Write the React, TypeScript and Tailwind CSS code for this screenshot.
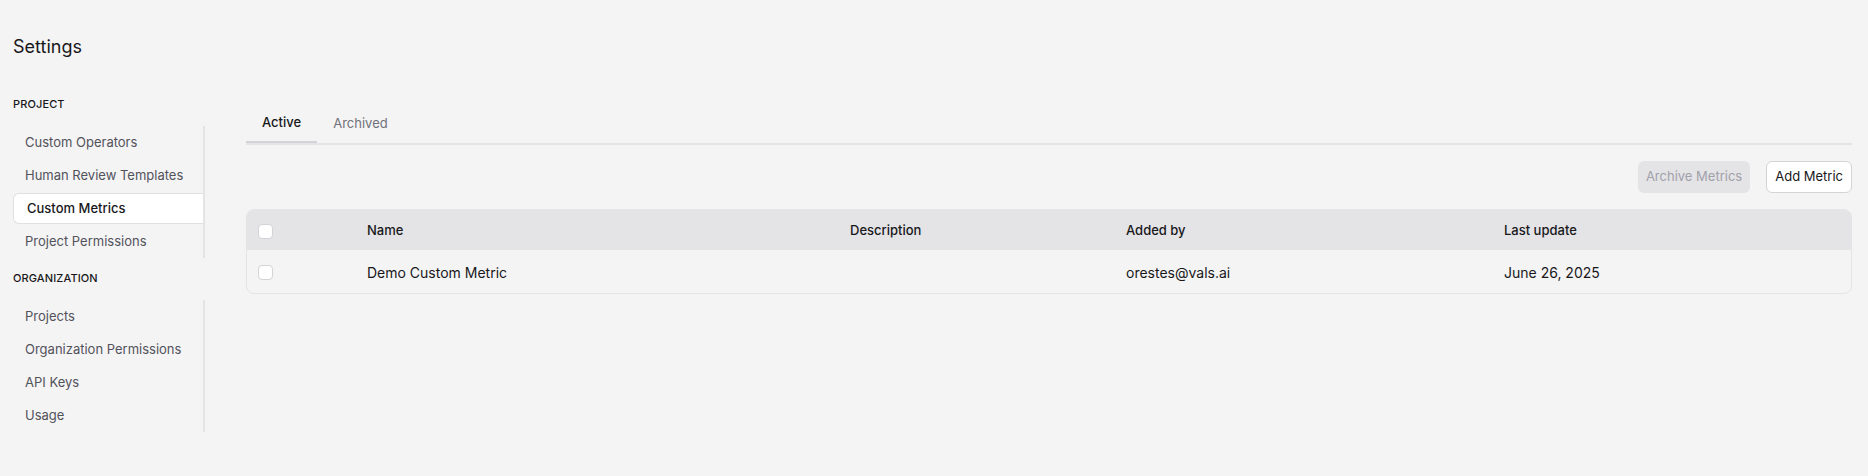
import React from 'react';

const projectLinks: string[] = ['Custom Operators', 'Human Review Templates', 'Custom Metrics', 'Project Permissions'];
const orgLinks: string[] = ['Projects', 'Organization Permissions', 'API Keys', 'Usage'];

const cols = 'grid grid-cols-[120px_483px_276px_378px_1fr] items-center';

const Checkbox: React.FC = () => (
  <span className="block w-[15px] h-[15px] rounded-[4px] bg-white border border-[#d4d4d8]" />
);

const NavGroup: React.FC<{ title: string; links: string[]; active?: string }> = ({ title, links, active }) => (
  <div>
    <div className="h-4 leading-4 text-[11px] font-medium text-[#18181b] tracking-[0.01em]">{title}</div>
    <ul className="mt-[14px] border-r-2 border-[#e4e4e7]">
      {links.map((l) =>
        l === active ? (
          <li key={l} className="h-[33px] flex items-center">
            <span className="flex items-center w-full h-[31px] pl-[13px] bg-white border border-r-0 border-[#e0e0e3] rounded-l-md text-[13px] font-medium text-[#18181b]">
              {l}
            </span>
          </li>
        ) : (
          <li key={l} className="h-[33px] flex items-center pl-3 text-[13px] text-[#52525b]">
            {l}
          </li>
        )
      )}
    </ul>
  </div>
);

const App: React.FC = () => {
  return (
    <div className="min-h-screen bg-[#f4f4f4] font-['Inter',sans-serif] text-[#18181b]">
      <h1 className="px-[13px] pt-[35px] text-lg leading-6">Settings</h1>

      <div className="flex items-start mt-[37px]">
        {/* sidebar */}
        <aside className="w-[192px] ml-[13px] shrink-0 flex flex-col gap-3">
          <NavGroup title="PROJECT" links={projectLinks} active="Custom Metrics" />
          <NavGroup title="ORGANIZATION" links={orgLinks} />
        </aside>

        {/* main */}
        <main className="flex-1 ml-[41px] mr-4 mt-[11px]">
          <div className="flex border-b-2 border-[#e4e4e7]">
            <button className="px-4 h-9 pb-[3px] -mb-[2px] border-b-2 border-[#d4d4d8] text-[13px] font-medium text-[#18181b]">
              Active
            </button>
            <button className="px-4 h-9 pb-[3px] text-[13px] text-[#71717a]">Archived</button>
          </div>

          <div className="flex justify-end gap-4 mt-4">
            <button className="h-8 px-2 rounded-md bg-[#e4e4e7] text-[13px] text-[#a1a1aa]">Archive Metrics</button>
            <button className="h-8 px-2 rounded-md bg-white border border-[#d4d4d8] text-[13px] text-[#18181b]">
              Add Metric
            </button>
          </div>

          <div className="mt-4 border border-[#e4e4e7] rounded-lg overflow-hidden">
            <div className={`${cols} h-10 pt-[2px] bg-[#e4e4e7] text-[13px] font-medium`}>
              <div className="pl-[11px]">
                <Checkbox />
              </div>
              <div>Name</div>
              <div>Description</div>
              <div>Added by</div>
              <div>Last update</div>
            </div>
            <div className={`${cols} h-[43px] pt-[2px] text-sm`}>
              <div className="pl-[11px]">
                <Checkbox />
              </div>
              <div>Demo Custom Metric</div>
              <div></div>
              <div>orestes@vals.ai</div>
              <div>June 26, 2025</div>
            </div>
          </div>
        </main>
      </div>
    </div>
  );
};

export default App;
